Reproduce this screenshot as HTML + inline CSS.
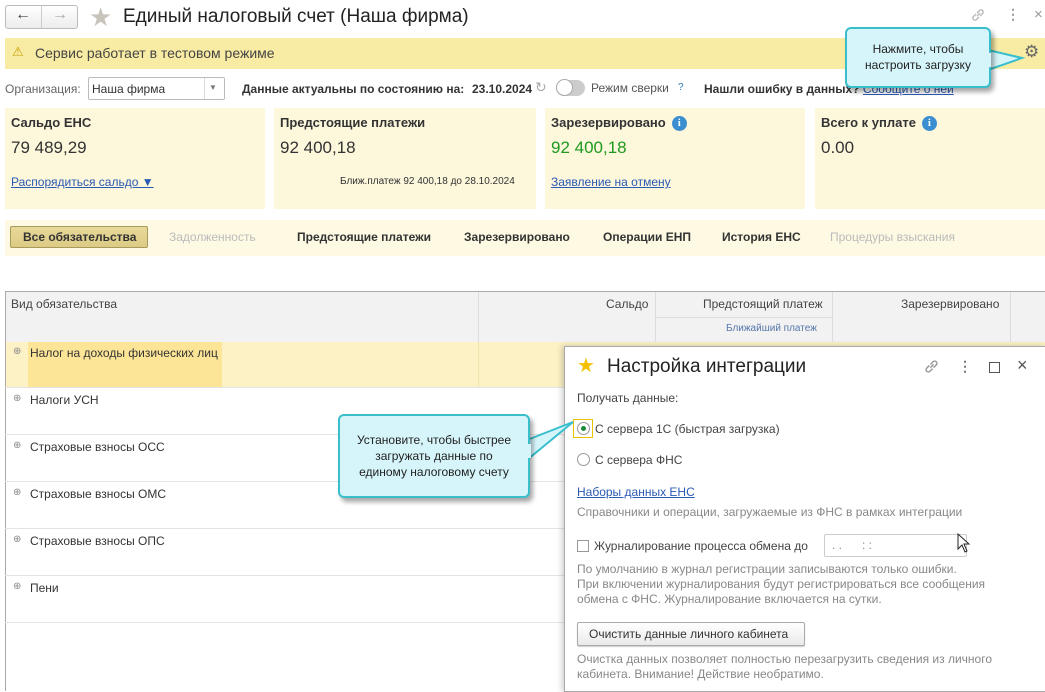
<!DOCTYPE html>
<html><head><meta charset="utf-8"><style>
*{margin:0;padding:0;box-sizing:border-box}
body{width:1045px;height:691px;position:relative;overflow:hidden;background:#fff;font-family:"Liberation Sans",Arial,sans-serif;color:#333;font-size:12px}
.a{position:absolute;white-space:nowrap}
.card{position:absolute;top:108px;height:101px;background:#fdf7dc}
.card .h{position:absolute;left:6px;top:7px;font-weight:bold;font-size:13px;color:#333}
.card .v{position:absolute;left:6px;top:30px;font-size:17px;color:#333}
.lnk{color:#2a5ab3;text-decoration:underline}
.info{display:inline-block;width:15px;height:15px;border-radius:50%;background:#3b8fd0;color:#fff;font-size:11px;font-weight:bold;text-align:center;line-height:15px;vertical-align:1px;margin-left:6px;font-family:"Liberation Serif",serif}
.tab{position:absolute;top:230px;font-size:12px;font-weight:bold;color:#333}
.row{position:absolute;left:5px;width:560px;height:47px;border-top:1px solid #e4e4e4}
.row span{position:absolute;left:25px;top:5px;font-size:12px;color:#333}
.row i{position:absolute;left:8px;top:5px;font-style:normal;font-size:10px;color:#888}
.dg{font-size:12px;color:#888}
.call{position:absolute;background:#d6f5fa;border:2px solid #39bfcc;border-radius:6px;box-shadow:3px 4px 5px rgba(0,0,0,.35);text-align:center;font-size:12px;color:#222;line-height:16px}
</style></head><body>
<!-- top bar -->
<div class="a" style="left:5px;top:5px;width:73px;height:24px;border:1px solid #bbb;border-radius:3px;background:linear-gradient(#fff,#ececec)"></div>
<div class="a" style="left:41px;top:6px;width:1px;height:22px;background:#ccc"></div>
<div class="a" style="left:15px;top:6px;font-size:16px;color:#444;font-weight:bold">&#8592;</div>
<div class="a" style="left:52px;top:6px;font-size:16px;color:#aaa;font-weight:bold">&#8594;</div>
<div class="a" style="left:89px;top:2px;font-size:26px;color:#c9c4bb">&#9733;</div>
<div class="a" style="left:123px;top:6px;font-size:19px;color:#222">Единый налоговый счет (Наша фирма)</div>
<svg class="a" style="left:970px;top:7px" width="16" height="16" viewBox="0 0 16 16" fill="none" stroke="#bbb" stroke-width="1.5"><path d="M7 9l3-3M6 7L3.5 9.5a2.1 2.1 0 003 3L9 10M10 9l2.5-2.5a2.1 2.1 0 00-3-3L7 6"/></svg>
<div class="a" style="left:1006px;top:6px;font-size:14px;color:#999;font-weight:bold">&#8942;</div>
<div class="a" style="left:1034px;top:6px;font-size:15px;color:#999">&#215;</div>
<!-- yellow bar -->
<div class="a" style="left:5px;top:38px;width:1040px;height:31px;background:#f8eba4"></div>
<div class="a" style="left:12px;top:44px;font-size:13px;color:#c9a000">&#9888;</div>
<div class="a" style="left:35px;top:45px;font-size:14px;color:#444">Сервис работает в тестовом режиме</div>
<div class="a" style="left:1024px;top:42px;font-size:17px;color:#666">&#9881;</div>
<!-- org row -->
<div class="a" style="left:5px;top:82px;font-size:12px;color:#666">Организация:</div>
<div class="a" style="left:88px;top:77px;width:137px;height:23px;border:1px solid #bbb;border-radius:2px;background:#fff"></div>
<div class="a" style="left:204px;top:78px;width:1px;height:21px;background:#ddd"></div>
<div class="a" style="left:92px;top:82px;font-size:12px;color:#333">Наша фирма</div>
<div class="a" style="left:209px;top:83px;font-size:8px;color:#777">&#9660;</div>
<div class="a" style="left:242px;top:82px;font-size:12px;font-weight:bold;color:#333">Данные актуальны по состоянию на:</div>
<div class="a" style="left:472px;top:82px;font-size:12px;font-weight:bold;color:#333">23.10.2024</div>
<div class="a" style="left:535px;top:79px;font-size:14px;color:#aaa">&#8635;</div>
<div class="a" style="left:556px;top:80px;width:29px;height:16px;border-radius:8px;background:#ccc"></div>
<div class="a" style="left:556px;top:79px;width:17px;height:17px;border-radius:50%;background:#fff;border:1px solid #aaa"></div>
<div class="a" style="left:591px;top:81px;font-size:12px;color:#555">Режим сверки</div>
<div class="a" style="left:678px;top:82px;font-size:10px;color:#2a7ab3">?</div>
<div class="a" style="left:704px;top:82px;font-size:12px;font-weight:bold;color:#333">Нашли ошибку в данных? <span class="lnk" style="font-weight:normal">Сообщите о ней</span></div>
<!-- cards -->
<div class="card" style="left:5px;width:260px"><div class="h">Сальдо ЕНС</div><div class="v">79 489,29</div><div class="a lnk" style="left:6px;top:67px;font-size:12px">Распорядиться сальдо &#9660;</div></div>
<div class="card" style="left:274px;width:262px"><div class="h">Предстоящие платежи</div><div class="v">92 400,18</div><div class="a" style="left:66px;top:68px;font-size:10px;color:#333">Ближ.платеж 92 400,18 до 28.10.2024</div></div>
<div class="card" style="left:545px;width:260px"><div class="h">Зарезервировано<span class="info">i</span></div><div class="v" style="color:#1f9a1f">92 400,18</div><div class="a lnk" style="left:6px;top:67px;font-size:12px">Заявление на отмену</div></div>
<div class="card" style="left:815px;width:230px"><div class="h">Всего к уплате<span class="info">i</span></div><div class="v">0.00</div></div>
<!-- tabs -->
<div class="a" style="left:5px;top:220px;width:1040px;height:36px;background:#fdf9e2"></div>
<div class="a" style="left:10px;top:226px;width:138px;height:22px;border:1px solid #a89a5a;border-radius:2px;background:linear-gradient(#e8d99a,#dccb84)"></div>
<div class="tab" style="left:23px">Все обязательства</div>
<div class="tab" style="left:169px;color:#bbb;font-weight:normal">Задолженность</div>
<div class="tab" style="left:297px">Предстоящие платежи</div>
<div class="tab" style="left:464px">Зарезервировано</div>
<div class="tab" style="left:603px">Операции ЕНП</div>
<div class="tab" style="left:722px">История ЕНС</div>
<div class="tab" style="left:830px;color:#bbb;font-weight:normal">Процедуры взыскания</div>
<!-- table -->
<div class="a" style="left:5px;top:291px;width:1040px;height:400px;border-left:1px solid #aaa;border-top:1px solid #aaa"></div>
<div class="a" style="left:6px;top:292px;width:1039px;height:50px;background:#f2f2f2"></div>
<div class="a" style="left:478px;top:292px;width:1px;height:50px;background:#ddd"></div>
<div class="a" style="left:655px;top:292px;width:1px;height:50px;background:#ddd"></div>
<div class="a" style="left:832px;top:292px;width:1px;height:50px;background:#ddd"></div>
<div class="a" style="left:1010px;top:292px;width:1px;height:50px;background:#ddd"></div>
<div class="a" style="left:656px;top:317px;width:176px;height:1px;background:#ddd"></div>
<div class="a" style="left:11px;top:297px;font-size:12px;color:#444">Вид обязательства</div>
<div class="a" style="left:606px;top:297px;font-size:12px;color:#444">Сальдо</div>
<div class="a" style="left:703px;top:297px;font-size:12px;color:#444">Предстоящий платеж</div>
<div class="a" style="left:901px;top:297px;font-size:12px;color:#444">Зарезервировано</div>
<div class="a" style="left:726px;top:323px;font-size:10px;color:#5577aa">Ближайший платеж</div>
<div class="a" style="left:6px;top:342px;width:1039px;height:45px;background:#fdf2c6"></div>
<div class="a" style="left:28px;top:342px;width:194px;height:45px;background:#fde597"></div>
<div class="a" style="left:478px;top:342px;width:1px;height:45px;background:#f0e4b0"></div>
<div class="row" style="top:341px;border-top:none"><i>&#8853;</i><span>Налог на доходы физических лиц</span></div>
<div class="row" style="top:387px"><i>&#8853;</i><span>Налоги УСН</span></div>
<div class="row" style="top:434px"><i>&#8853;</i><span>Страховые взносы ОСС</span></div>
<div class="row" style="top:481px"><i>&#8853;</i><span>Страховые взносы ОМС</span></div>
<div class="row" style="top:528px"><i>&#8853;</i><span>Страховые взносы ОПС</span></div>
<div class="row" style="top:575px"><i>&#8853;</i><span>Пени</span></div>
<div class="row" style="top:622px"></div>
<!-- dialog -->
<div class="a" style="left:564px;top:346px;width:482px;height:346px;background:#fff;border:1px solid #aaa;box-shadow:-2px 0 6px rgba(0,0,0,.2)"></div>
<div class="a" style="left:577px;top:353px;font-size:20px;color:#f3c000">&#9733;</div>
<div class="a" style="left:607px;top:356px;font-size:19px;color:#222">Настройка интеграции</div>
<svg class="a" style="left:923px;top:358px" width="17" height="17" viewBox="0 0 16 16" fill="none" stroke="#999" stroke-width="1.4"><path d="M7 9l3-3M6 7L3.5 9.5a2.1 2.1 0 003 3L9 10M10 9l2.5-2.5a2.1 2.1 0 00-3-3L7 6"/></svg>
<div class="a" style="left:958px;top:358px;font-size:14px;color:#777;font-weight:bold">&#8942;</div>
<div class="a" style="left:989px;top:362px;width:11px;height:11px;border:1.5px solid #555"></div>
<div class="a" style="left:1017px;top:355px;font-size:18px;color:#555">&#215;</div>
<div class="a" style="left:577px;top:391px;font-size:12px;color:#444">Получать данные:</div>
<div class="a" style="left:573px;top:419px;width:20px;height:19px;border:1px solid #e8c400"></div>
<div class="a" style="left:577px;top:422px;width:13px;height:13px;border-radius:50%;border:1px solid #999;background:#fff"></div>
<div class="a" style="left:581px;top:426px;width:5px;height:5px;border-radius:50%;background:#1a8a3a"></div>
<div class="a" style="left:595px;top:422px;font-size:12px;color:#444">С сервера 1С (быстрая загрузка)</div>
<div class="a" style="left:577px;top:453px;width:13px;height:13px;border-radius:50%;border:1px solid #999;background:#fff"></div>
<div class="a" style="left:595px;top:453px;font-size:12px;color:#444">С сервера ФНС</div>
<div class="a lnk" style="left:577px;top:485px;font-size:12px">Наборы данных ЕНС</div>
<div class="a dg" style="left:577px;top:505px">Справочники и операции, загружаемые из ФНС в рамках интеграции</div>
<div class="a" style="left:577px;top:540px;width:12px;height:12px;border:1px solid #999"></div>
<div class="a" style="left:594px;top:539px;font-size:12px;color:#444">Журналирование процесса обмена до</div>
<div class="a" style="left:824px;top:534px;width:143px;height:23px;border:1px solid #ccc;border-radius:2px"></div>
<div class="a" style="left:832px;top:538px;font-size:12px;color:#888">. .&nbsp;&nbsp;&nbsp;&nbsp;&nbsp;&nbsp;: :</div>
<svg class="a" style="left:957px;top:533px" width="13" height="20" viewBox="0 0 13 20"><path d="M1 1v15l4-4 3 7 2-1-3-7h5z" fill="#fff" stroke="#222" stroke-width="1"/></svg>
<div class="a dg" style="left:577px;top:562px;line-height:15px">По умолчанию в журнал регистрации записываются только ошибки.<br>При включении журналирования будут регистрироваться все сообщения<br>обмена с ФНС. Журналирование включается на сутки.</div>
<div class="a" style="left:577px;top:622px;width:228px;height:24px;border:1px solid #aaa;border-radius:2px;background:linear-gradient(#fff,#eaeaea);box-shadow:0 1px 1px rgba(0,0,0,.2)"></div>
<div class="a" style="left:589px;top:627px;font-size:12px;color:#333">Очистить данные личного кабинета</div>
<div class="a dg" style="left:577px;top:652px;line-height:15px">Очистка данных позволяет полностью перезагрузить сведения из личного<br>кабинета. Внимание! Действие необратимо.</div>
<!-- callouts -->
<svg class="a" style="left:0;top:0" width="1045" height="691"><polygon points="527,440 573,422 527,460" fill="#d6f5fa" stroke="#39bfcc" stroke-width="2"/><polygon points="988,50 1022,58 988,70" fill="#d6f5fa" stroke="#39bfcc" stroke-width="2"/></svg>
<div class="call" style="left:338px;top:414px;width:192px;height:84px;padding-top:16px">Установите, чтобы быстрее<br>загружать данные по<br>единому налоговому счету</div>
<div class="call" style="left:845px;top:27px;width:146px;height:61px;padding-top:12px">Нажмите, чтобы<br>настроить загрузку</div>
<svg class="a" style="left:0;top:0" width="1045" height="691"><rect x="527" y="444" width="4" height="14" fill="#d6f5fa"/><rect x="987" y="53" width="4" height="14" fill="#d6f5fa"/></svg>
</body></html>
